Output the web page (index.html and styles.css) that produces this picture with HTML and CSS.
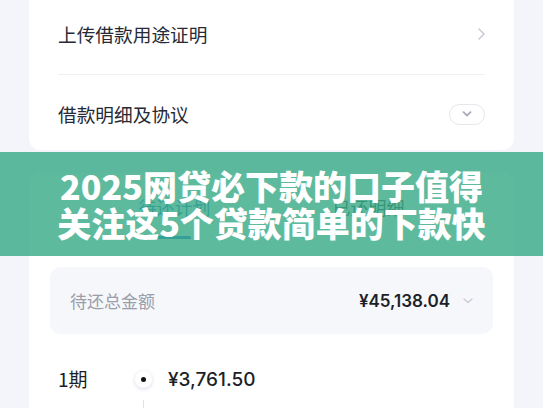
FILE: index.html
```html
<!DOCTYPE html>
<html lang="zh-CN">
<head>
    <meta charset="UTF-8">
    <meta name="viewport" content="width=device-width, initial-scale=1.0">
    <title>2025网贷必下款的口子</title>
    <link rel="stylesheet" href="styles.css">
</head>
<body>
    <div class="page">
        <div class="card card-top">
            <div class="row row-first">
                <span class="row-title">上传借款用途证明</span>
                <svg class="chevron-right" width="7" height="12" viewBox="0 0 7 12">
                    <path d="M1 1l5 5-5 5" fill="none" stroke="#c4c7cf" stroke-width="1.4" stroke-linecap="round" stroke-linejoin="round"/>
                </svg>
            </div>
            <div class="row row-second">
                <span class="row-title">借款明细及协议</span>
                <span class="pill">
                    <svg width="10" height="6" viewBox="0 0 10 6">
                        <path d="M1.5 1.2L5 4.5l3.5-3.3" fill="none" stroke="#a9adbb" stroke-width="1.8" stroke-linecap="round" stroke-linejoin="round"/>
                    </svg>
                </span>
            </div>
        </div>

        <div class="card card-plan">
            <div class="tabs">
                <div class="tab active">
                    <span>待还计划</span>
                    <i class="tab-line"></i>
                </div>
                <div class="tab">
                    <span>已还明细</span>
                </div>
            </div>

            <div class="total">
                <span class="total-label">待还总金额</span>
                <span class="total-value">
                    ¥45,138.04
                    <svg width="10" height="6" viewBox="0 0 10 6">
                        <path d="M1 1l4 3.5L9 1" fill="none" stroke="#c9ccd4" stroke-width="1.3" stroke-linecap="round" stroke-linejoin="round"/>
                    </svg>
                </span>
            </div>

            <div class="timeline">
                <div class="term">1期</div>
                <div class="dot"><i></i></div>
                <div class="amount">¥3,761.50</div>
                <div class="date">2024/08/23</div>
                <div class="line"></div>
                <div class="detail">本金 ¥3,500.00 <span>利息 ¥261.50</span></div>
            </div>
        </div>
    </div>

    <div class="banner">
        <h1>2025网贷必下款的口子值得<br>关注这5个贷款简单的下款快</h1>
    </div>
</body>
</html>
```

FILE: styles.css
```css
body {
    margin: 0;
    padding: 0;
    background: #f3f5fa;
    font-family: 'Noto Sans CJK SC', 'Noto Sans', sans-serif;
    color: #222633;
    height: 408px;
    overflow: hidden;
}

.page {
    padding: 0 29px;
}

.card {
    background-color: #fff;
    border-radius: 12px;
}

.card-top {
    border-radius: 0 0 12px 12px;
    padding: 0 29px;
}

.row {
    display: flex;
    align-items: center;
    justify-content: space-between;
    box-sizing: border-box;
}

.row-first {
    height: 75px;
    padding-bottom: 6px;
    border-bottom: 1px solid #eef0f4;
}

.row-second {
    height: 75px;
    padding-top: 3px;
}

.row-title {
    font-size: 18.7px;
    line-height: 26px;
    color: #262a36;
}

.pill {
    width: 34px;
    height: 19px;
    border: 1px solid #e4e6ec;
    border-radius: 11px;
    display: flex;
    align-items: center;
    justify-content: center;
}

.card-plan {
    margin-top: 23px;
    height: 300px;
    border-radius: 12px 12px 0 0;
    padding: 0 21px;
}

.tabs {
    display: flex;
    justify-content: center;
    padding-top: 21px;
}

.tab {
    width: 194px;
    display: flex;
    flex-direction: column;
    align-items: center;
    font-size: 18px;
    line-height: 26px;
    color: #333;
}

.tab.active {
    color: #1f6fe0;
}

.tab-line {
    display: block;
    width: 33px;
    height: 3px;
    margin-top: 16px;
    border-radius: 2px;
    background-color: #1f6fe0;
}

.total {
    margin-top: 28px;
    height: 67px;
    border-radius: 10px;
    background-color: #f6f7fa;
    padding: 0 20px;
    display: flex;
    align-items: center;
    justify-content: space-between;
}

.total-label {
    font-size: 17px;
    color: #9a9ea8;
}

.total-value {
    display: flex;
    align-items: center;
    gap: 13px;
    font-family: 'Inter', 'Noto Sans CJK SC', sans-serif;
    font-size: 17px;
    font-weight: 600;
    color: #1c1f28;
}

.timeline {
    display: grid;
    grid-template-columns: 61px 17px 1fr;
    column-gap: 16px;
    row-gap: 8px;
    margin-top: 32px;
    padding-left: 8px;
    align-items: center;
}

.term {
    font-size: 19px;
    line-height: 26px;
    color: #1c1f28;
}

.dot {
    width: 17px;
    height: 17px;
    border-radius: 50%;
    background: #fff;
    box-shadow: 0 1px 4px rgba(40, 60, 120, 0.18);
    display: flex;
    align-items: center;
    justify-content: center;
}

.dot i {
    width: 5px;
    height: 5px;
    border-radius: 50%;
    background: #111;
}

.amount {
    font-family: 'Inter', 'Noto Sans CJK SC', sans-serif;
    font-size: 19px;
    font-weight: 500;
    color: #1c1f28;
}

.date,
.detail {
    font-size: 13px;
    line-height: 20px;
    color: #a3a7b1;
}

.detail span {
    margin-left: 40px;
}

.line {
    justify-self: center;
    width: 1px;
    height: 40px;
    background: #dfe2e8;
}

/* title banner laid over the screenshot */
.banner {
    position: absolute;
    left: 0;
    right: 0;
    top: 152px;
    height: 104px;
    background: rgba(58, 171, 135, 0.82);
    display: flex;
    align-items: center;
    justify-content: center;
}

.banner h1 {
    margin: 0;
    font-size: 34px;
    line-height: 37px;
    font-weight: 900;
    color: #fff;
    text-align: center;
}
```
